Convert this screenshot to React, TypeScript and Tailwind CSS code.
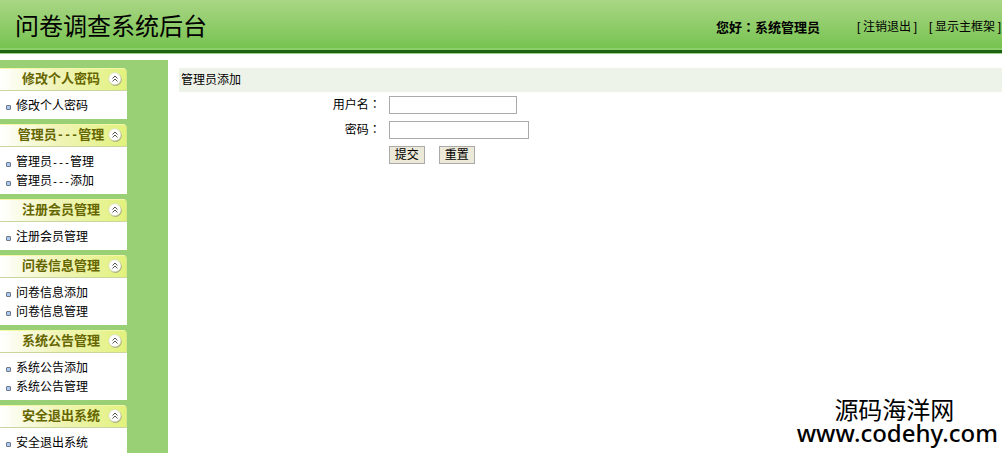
import React from "react";

const groups: { title: string; items: string[] }[] = [
  { title: "修改个人密码", items: ["修改个人密码"] },
  { title: "管理员---管理", items: ["管理员---管理", "管理员---添加"] },
  { title: "注册会员管理", items: ["注册会员管理"] },
  { title: "问卷信息管理", items: ["问卷信息添加", "问卷信息管理"] },
  { title: "系统公告管理", items: ["系统公告添加", "系统公告管理"] },
  { title: "安全退出系统", items: ["安全退出系统"] },
];

function Dashed({ text, dashClass }: { text: string; dashClass: string }) {
  const [before, after] = text.split("---");
  if (after === undefined) return <>{text}</>;
  return (
    <>
      {before}
      <span className={dashClass}>---</span>
      {after}
    </>
  );
}

/* Full-width colon, centred in its cell */
function Colon() {
  return <span className="font-['Noto_Sans_CJK_TC',sans-serif]">：</span>;
}

function CollapseIcon() {
  return (
    <svg width="14" height="14" viewBox="0 0 14 14" aria-hidden="true" className="shrink-0">
      <circle cx="7.5" cy="7.6" r="6.3" fill="#a9ad80" />
      <circle cx="6.8" cy="6.7" r="6.1" fill="#fdfdfb" stroke="#d5d8bd" strokeWidth="0.6" />
      <path d="M4.5 6.5L7 4L9.5 6.5M4.5 9.5L7 7L9.5 9.5" fill="none" stroke="#555" strokeWidth="1" />
    </svg>
  );
}

function Bullet() {
  return (
    <svg width="5" height="5" viewBox="0 0 5 5" aria-hidden="true" className="mt-0.5 shrink-0">
      <rect x="0.5" y="0.5" width="4" height="4" rx="0.5" fill="#a9c9f8" stroke="#6f7780" />
    </svg>
  );
}

function MenuGroup({ title, items }: { title: string; items: string[] }) {
  return (
    <section>
      <button
        type="button"
        className="flex h-[23px] w-full items-center rounded-tr border-t border-r border-b border-t-[#f3f7a8] border-r-[#d9e58a] border-b-[#c9d6a0] bg-linear-to-r from-white via-[#f0f4b8] via-45% to-[#e2f27c] pr-1 pb-0.5 text-[13px] leading-5 font-bold text-[#666600]"
      >
        <span className="flex-1 pl-3.5 text-center whitespace-nowrap">
          <Dashed text={title} dashClass="font-['Liberation_Mono'] text-xs" />
        </span>
        <CollapseIcon />
      </button>
      <ul className="bg-white pt-1.5 pb-[3px] pl-1.5">
        {items.map((item) => (
          <li key={item} className="h-[19px] leading-[19px]">
            <a href="#" className="flex items-center gap-[5px] whitespace-nowrap">
              <Bullet />
              <span>
                <Dashed text={item} dashClass="font-['Liberation_Mono'] text-[10px]" />
              </span>
            </a>
          </li>
        ))}
      </ul>
    </section>
  );
}

function BracketLink({ children }: { children: React.ReactNode }) {
  return (
    <a href="#" className="flex leading-4 whitespace-nowrap">
      <span className="w-1.5">[</span>
      {children}
      <span className="w-1.5 text-right">]</span>
    </a>
  );
}

export default function App() {
  const field = "block h-[18px] border border-[#aaaaaa] bg-white px-0.5 text-xs outline-none";
  const button = "h-[18px] border border-[#aaaaaa] bg-[#ece9d8] px-[5px] text-xs leading-4";
  return (
    <div className="relative flex h-screen flex-col overflow-hidden bg-white font-['Liberation_Sans','Noto_Sans_CJK_SC',sans-serif] text-xs text-black">
      <header className="shrink-0">
        <div className="flex h-12 items-center justify-between bg-linear-to-b from-[#a9d684] to-[#77c350] pt-1.5 pr-px">
          <h1 className="pl-[15px] text-2xl leading-8 font-normal">问卷调查系统后台</h1>
          <div className="flex items-center">
            <strong className="mr-[37px] h-4 text-[13px] leading-4">
              您好
              <Colon />
              系统管理员
            </strong>
            <nav className="flex gap-3">
              <BracketLink>注销退出</BracketLink>
              <BracketLink>显示主框架</BracketLink>
            </nav>
          </div>
        </div>
        <div className="h-0.5 bg-[#8bcf68]" />
        <div className="h-[3px] bg-[#1c6411]" />
        <div className="h-px bg-[#9dce89]" />
      </header>

      <div className="mt-1.5 flex min-h-0 flex-1">
        <aside className="w-[168px] shrink-0 overflow-hidden bg-[#99d075] pt-2">
          <div className="flex w-[127px] flex-col gap-[5px]">
            {groups.map((group) => (
              <MenuGroup key={group.title} {...group} />
            ))}
          </div>
        </aside>

        <main className="flex-1 pt-2 pl-[11px]">
          <h2 className="bg-[#eef3e9] pl-0.5 leading-6">管理员添加</h2>
          <form
            className="grid grid-cols-[1fr_3fr] items-center gap-x-2 gap-y-[7px] pt-1 pr-2"
            onSubmit={(e) => e.preventDefault()}
          >
            <label htmlFor="username" className="h-[18px] text-right leading-4">
              用户名
              <Colon />
            </label>
            <div>
              <input id="username" type="text" className={field + " w-32"} />
            </div>
            <label htmlFor="password" className="h-[18px] text-right leading-4">
              密码
              <Colon />
            </label>
            <div>
              <input id="password" type="password" className={field + " w-[140px]"} />
            </div>
            <div className="col-start-2 flex gap-3.5">
              <button type="submit" className={button}>
                提交
              </button>
              <button type="reset" className={button}>
                重置
              </button>
            </div>
          </form>
        </main>
      </div>

      <div className="absolute right-1 bottom-2 text-center whitespace-nowrap">
        <p className="pr-1.5 font-['Noto_Sans_CJK_SC',sans-serif] text-2xl leading-6">源码海洋网</p>
        <p className="font-['Noto_Sans',sans-serif] text-2xl leading-6 font-medium">www.codehy.com</p>
      </div>
    </div>
  );
}
